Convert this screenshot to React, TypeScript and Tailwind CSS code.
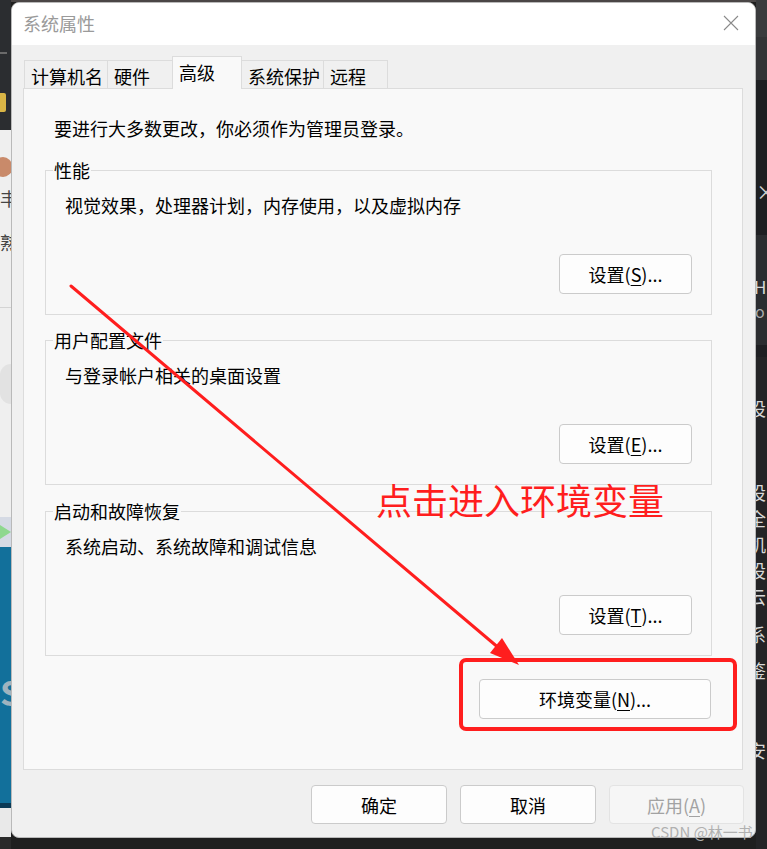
import React from "react";

const F = "font-['Noto_Sans_CJK_SC','Noto_Sans',sans-serif]";

function Btn({
  children,
  className = "",
  disabled = false,
}: {
  children: React.ReactNode;
  className?: string;
  disabled?: boolean;
}) {
  return (
    <div
      className={
        "flex items-center justify-center rounded-[4px] border text-[18px] leading-[24px] " +
        (disabled
          ? "border-[#e3e3e3] bg-[#f6f6f6] text-[#a2a2a2] "
          : "border-[#cbcbcb] bg-[#fdfdfd] text-black ") +
        className
      }
    >
      {children}
    </div>
  );
}

function Group({
  title,
  text,
  btn,
  className = "",
}: {
  title: string;
  text: string;
  btn: React.ReactNode;
  className?: string;
}) {
  return (
    <fieldset
      className={
        "h-[157px] w-[667px] border border-[#dcdcdc] pl-[7px] pr-[19px] " + className
      }
    >
      <legend className="px-[1px] text-[18px] leading-[24px] text-black">{title}</legend>
      <div className="flex h-[132px] flex-col">
        <div className="ml-[12px] mt-[11px] text-[18px] leading-[24px] text-black">{text}</div>
        <div className="mb-[20px] mt-auto flex justify-end">
          <Btn className="h-[40px] w-[133px]">{btn}</Btn>
        </div>
      </div>
    </fieldset>
  );
}

function Tab({
  label,
  w,
  selected = false,
  first = false,
}: {
  label: string;
  w: string;
  selected?: boolean;
  first?: boolean;
}) {
  return (
    <div
      className={
        "border border-b-0 border-[#dcdcdc] pl-[6px] text-[18px] leading-[24px] text-black " +
        (first ? "" : "-ml-[1px] ") +
        (selected
          ? "relative z-10 -mb-[1px] h-[33px] bg-[#f9f9f9] pt-[3px] "
          : "h-[28px] bg-[#f0f0f0] pt-[3px] ") +
        w
      }
    >
      {label}
    </div>
  );
}

export default function App() {
  return (
    <div className={"relative flex h-[849px] w-[767px] overflow-hidden bg-[#1f1f1f] " + F}>
      {/* left background strip */}
      <div className="flex w-[11px] shrink-0 flex-col overflow-hidden">
        <div className="flex h-[130px] flex-col bg-[#2b2d30]">
          <div className="mt-[52px] h-[2px] w-[7px] bg-[#6a6a6a]" />
          <div className="mt-[39px] h-[19px] w-[6px] rounded-r-[2px] bg-[#d9b546]" />
        </div>
        <div className="flex h-[387px] flex-col bg-[#efefef]">
          <div className="ml-[-6px] mt-[27px] h-[20px] w-[18px] rounded-full bg-[#c98a6a]" />
          <div className="mt-[9px] whitespace-nowrap text-[18px] leading-[24px] text-[#444]">丰</div>
          <div className="mt-[20px] whitespace-nowrap text-[18px] leading-[24px] text-[#444]">熟</div>
          <div className="mt-[53px] h-[1px] bg-[#d4d4d4]" />
          <div className="mt-[56px] h-[40px] rounded-l-[12px] bg-[#e2e2e2]" />
        </div>
        <div className="flex h-[30px] items-center bg-[#d5dae4]">
          <div className="h-0 w-0 border-y-[7px] border-l-[11px] border-y-transparent border-l-[#8ed88e]" />
        </div>
        <div className="flex h-[256px] flex-col bg-[#12709b]">
          <div className="mt-[128px] whitespace-nowrap text-[34px] font-bold leading-[34px] text-[#9fb3bf]">S</div>
        </div>
        <div className="h-[5px] bg-[#0b3a56]" />
        <div className="h-[29px] bg-[#e9e9e9]" />
        <div className="flex-1 bg-[#2a2a2a]" />
      </div>

      {/* middle column */}
      <div className="flex w-[745px] shrink-0 flex-col">
        <div className="h-[2px] bg-[#4a4646]" />
        <div className="flex h-[836px] flex-col overflow-hidden rounded-[8px] border border-[#b9b9b9] bg-[#f0f0f0]">
          {/* title bar */}
          <div className="flex h-[42px] items-center justify-between bg-white pb-[3px] pl-[11px] pr-[16px]">
            <div className="text-[18px] leading-[24px] text-[#9a9a9a]">系统属性</div>
            <svg width="16" height="16" viewBox="0 0 16 16">
              <path d="M1 1 L15 15 M15 1 L1 15" stroke="#8a8a8a" strokeWidth="1.1" fill="none" />
            </svg>
          </div>
          {/* tabs */}
          <div className="flex h-[43px] items-end pl-[12px]">
            <Tab label="计算机名" w="w-[84px]" first />
            <Tab label="硬件" w="w-[66px]" />
            <Tab label="高级" w="w-[70px]" selected />
            <Tab label="系统保护" w="w-[83px]" />
            <Tab label="远程" w="w-[65px]" />
          </div>
          {/* panel */}
          <div className="ml-[11px] flex h-[682px] w-[720px] flex-col border border-[#dcdcdc] bg-[#f9f9f9] pl-[21px] pt-[27px]">
            <div className="ml-[9px] text-[18px] leading-[24px] text-black">
              要进行大多数更改，你必须作为管理员登录。
            </div>
            <Group
              className="mt-[18px]"
              title="性能"
              text="视觉效果，处理器计划，内存使用，以及虚拟内存"
              btn={
                <span>
                  设置(<span className="underline underline-offset-[3px]">S</span>)...
                </span>
              }
            />
            <Group
              className="mt-[13px]"
              title="用户配置文件"
              text="与登录帐户相关的桌面设置"
              btn={
                <span>
                  设置(<span className="underline underline-offset-[3px]">E</span>)...
                </span>
              }
            />
            <Group
              className="mt-[14px]"
              title="启动和故障恢复"
              text="系统启动、系统故障和调试信息"
              btn={
                <span>
                  设置(<span className="underline underline-offset-[3px]">T</span>)...
                </span>
              }
            />
            <div className="mt-[23px] flex w-[667px] justify-end pr-[1px]">
              <Btn className="h-[40px] w-[232px]">
                <span>
                  环境变量(<span className="underline underline-offset-[3px]">N</span>)...
                </span>
              </Btn>
            </div>
          </div>
          {/* bottom buttons */}
          <div className="flex justify-end gap-[13px] pr-[11px] pt-[15px]">
            <Btn className="h-[39px] w-[136px]">确定</Btn>
            <Btn className="h-[39px] w-[136px]">取消</Btn>
            <Btn className="h-[39px] w-[135px]" disabled>
              <span>
                应用(<span className="underline underline-offset-[3px]">A</span>)
              </span>
            </Btn>
          </div>
        </div>
        <div className="flex-1 bg-[#1f1f1f]" />
      </div>

      {/* right background strip */}
      <div className="flex w-[11px] shrink-0 flex-col overflow-hidden text-[18px] leading-[24px] text-[#d8d8d8]">
        <div className="h-[37px] bg-[#3a3b3d]" />
        <div className="h-[43px] bg-[#333436]" />
        <div className="flex h-[155px] flex-col bg-[#1e1f22]">
          <div className="mt-[100px] whitespace-nowrap text-[20px] leading-[24px] text-[#cfcfcf]">×</div>
        </div>
        <div className="flex h-[110px] flex-col whitespace-nowrap bg-[#2b2d30]">
          <div className="ml-[-8px] mt-[42px] text-[17px] leading-[20px]">-H</div>
          <div className="ml-[-1px] mt-[4px] text-[16px] leading-[20px] text-[#aaa]">o</div>
        </div>
        <div className="h-[12px] bg-[#1e1f22]" />
        <div className="flex flex-1 flex-col whitespace-nowrap bg-[#242426]">
          <div className="ml-[-8px] mt-[39px]">设</div>
          <div className="ml-[-8px] mt-[60px]">设</div>
          <div className="ml-[-8px] mt-[2px]">全</div>
          <div className="ml-[-8px] mt-[2px]">机</div>
          <div className="ml-[-8px] mt-[2px]">设</div>
          <div className="ml-[-8px] mt-[2px]">云</div>
          <div className="ml-[-8px] mt-[14px]">系</div>
          <div className="ml-[-8px] mt-[12px]">鉴</div>
          <div className="ml-[-8px] mt-[56px]">安</div>
        </div>
      </div>

      {/* annotation overlay */}
      <svg
        className="pointer-events-none absolute left-0 top-0"
        width="767"
        height="849"
        viewBox="0 0 767 849"
      >
        <line x1="71" y1="286" x2="500" y2="649" stroke="#ff1e1e" strokeWidth="3" strokeLinecap="round" />
        <polygon points="519,665 490,653 502,638" fill="#ff1e1e" />
        <rect x="461" y="660" width="274" height="69" rx="5" fill="none" stroke="#ff1e1e" strokeWidth="4" />
      </svg>
      <div className="absolute left-[376px] top-[481px] whitespace-nowrap text-[36px] leading-[36px] text-[#ff1e1e]">
        点击进入环境变量
      </div>
      <div className="absolute left-[651px] top-[823px] whitespace-nowrap text-[15px] leading-[18px] text-[#b0b0b0]">
        CSDN @林一书
      </div>
    </div>
  );
}
